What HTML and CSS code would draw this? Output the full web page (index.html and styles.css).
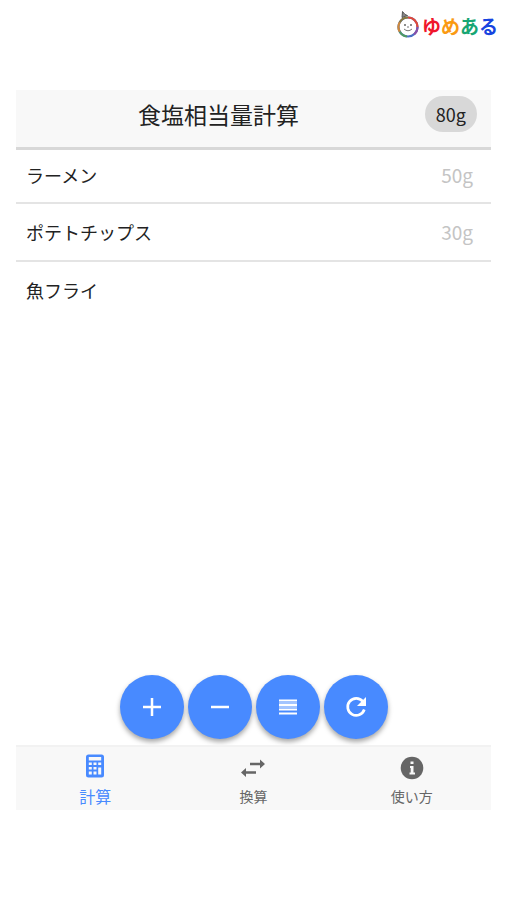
FILE: index.html
```html
<!DOCTYPE html>
<html lang="ja">
<head>
    <meta charset="UTF-8">
    <meta name="viewport" content="width=device-width, initial-scale=1.0">
    <title>食塩相当量計算</title>
    <link rel="stylesheet" href="styles.css">
</head>
<body>
    <div class="brand">
        <svg class="brand-icon" width="24" height="30" viewBox="0 0 24 30" fill="none">
            <path d="M6 7.500L6.500 1.500L9 4.500L11.500 5.500z" fill="#888" stroke="#555" stroke-width="1"/>
            <g stroke-width="2.200">
                <circle cx="12" cy="17" r="9.500" stroke="#4b6fc4"/>
                <path d="M12 7.500A9.500 9.500 0 0 1 21.500 17" stroke="#e0493a"/>
                <path d="M21.500 17A9.500 9.500 0 0 1 18 24.400" stroke="#8a4fa8"/>
                <path d="M3.800 12.200A9.500 9.500 0 0 1 12 7.500" stroke="#8a7a3c"/>
                <path d="M3.800 21.800A9.500 9.500 0 0 1 3.800 12.200" stroke="#d08a3a"/>
                <path d="M3.800 21.800A9.500 9.500 0 0 0 11 26.500" stroke="#4f9b62"/>
            </g>
            <circle cx="9" cy="15" r="1" fill="#666"/>
            <circle cx="15" cy="15" r="1" fill="#666"/>
            <path d="M8 19Q12 22.500 16 19M12 16v2" stroke="#777" stroke-width="1"/>
        </svg>
        <span class="brand-name"><span class="red">ゆ</span><span class="orange">め</span><span class="green">あ</span><span class="blue">る</span></span>
    </div>

    <div class="app">
        <header class="header">
            <h1>食塩相当量計算</h1>
            <span class="total">80g</span>
        </header>

        <ul class="food-list">
            <li><span>ラーメン</span><span class="amount">50g</span></li>
            <li><span>ポテトチップス</span><span class="amount">30g</span></li>
            <li><span>魚フライ</span></li>
        </ul>

        <div class="actions">
            <button type="button" class="fab" aria-label="追加">
                <svg width="24" height="24" viewBox="0 0 24 24"><path d="M12 3v18M3 12h18" stroke="#fff" stroke-width="2.500"/></svg>
            </button>
            <button type="button" class="fab" aria-label="削除">
                <svg width="24" height="24" viewBox="0 0 24 24"><path d="M3 12h18" stroke="#fff" stroke-width="2.500"/></svg>
            </button>
            <button type="button" class="fab" aria-label="一覧">
                <svg width="24" height="24" viewBox="0 0 24 24">
                    <path d="M3 7h18v6H3z" fill="#fff" opacity="0.5"/>
                    <path d="M3 5.500h18M3 10h18M3 14.500h18M3 18.500h18" stroke="#fff" stroke-width="2"/>
                </svg>
            </button>
            <button type="button" class="fab" aria-label="リセット">
                <svg width="24" height="24" viewBox="0 0 24 24">
                    <path d="M18.800 6.500A8.500 8.500 0 1 0 20.300 14.500" fill="none" stroke="#fff" stroke-width="2.700"/>
                    <path d="M22 2v9h-9z" fill="#fff"/>
                </svg>
            </button>
        </div>

        <nav class="tabs">
            <a href="#calc" class="tab active">
                <svg width="26" height="26" viewBox="0 0 26 26" fill="currentColor">
                    <path fill-rule="evenodd" d="M6.500 1.500h13a2.500 2.500 0 0 1 2.500 2.500v18a2.500 2.500 0 0 1-2.500 2.500h-13A2.500 2.500 0 0 1 4 22V4a2.500 2.500 0 0 1 2.500-2.500zM6.800 4v3.500h12.400V4zM6.800 9.500V12h3V9.500zM11.500 9.500V12h3V9.500zM16.200 9.500V12h3V9.500zM6.800 14v2.500h3V14zM11.500 14v2.500h3V14zM6.800 18.500v3h3v-3zM11.500 18.500v3h3v-3zM16.200 14.500v7h3v-7z"/>
                </svg>
                <span>計算</span>
            </a>
            <a href="#convert" class="tab">
                <svg width="26" height="26" viewBox="0 0 26 26" fill="currentColor">
                    <path d="M10 7.800h10V4.500l5 4.500-5 4.500v-3.300H10zM16 16.300H6V13l-5 4.500L6 22v-3.300h10z"/>
                </svg>
                <span>換算</span>
            </a>
            <a href="#help" class="tab">
                <svg width="26" height="26" viewBox="0 0 26 26">
                    <circle cx="13" cy="13" r="11.300" fill="currentColor"/>
                    <path d="M11.500 6.500h3v2.500h-3zM11 11h3.500v6.500H16v2h-5.500v-2h1.200v-4.500H11z" fill="#f8f8f8"/>
                </svg>
                <span>使い方</span>
            </a>
        </nav>
    </div>
</body>
</html>
```

FILE: styles.css
```css
* {
    margin: 0;
    padding: 0;
    box-sizing: border-box;
}

body {
    min-height: 100vh;
    display: flex;
    flex-direction: column;
    padding: 0 15px 90px 16px;
    background: #fff;
    color: #222;
    font-family: "Noto Sans CJK JP", sans-serif;
}

.brand {
    height: 90px;
    display: flex;
    justify-content: flex-end;
    align-items: flex-start;
    padding-top: 10px;
    margin-right: -7px;
}

.brand-icon {
    margin-right: 2px;
}

.brand-name {
    font-size: 19px;
    font-weight: bold;
    line-height: 32px;
}

.red { color: #f0162c; }
.orange { color: #fa9a12; }
.green { color: #17a673; }
.blue { color: #1744e0; }

.app {
    flex: 1;
    display: flex;
    flex-direction: column;
}

.header {
    display: grid;
    grid-template-columns: 1fr auto 1fr;
    align-items: center;
    height: 60px;
    padding: 0 14px 10px;
    background: #f8f8f8;
    border-bottom: 3px solid #d8d8d8;
}

.header h1 {
    grid-column: 2;
    font-size: 23px;
    font-weight: normal;
    line-height: 32px;
    margin-right: 70px;
}

.total {
    grid-column: 3;
    justify-self: end;
    padding: 0 11px;
    border-radius: 18px;
    background: #d8d8d8;
    font-size: 18px;
    line-height: 36px;
}

.food-list {
    list-style: none;
}

.food-list li {
    display: flex;
    justify-content: space-between;
    align-items: baseline;
    padding: 0 18px 0 10px;
    border-bottom: 2px solid #e4e4e4;
    font-size: 18px;
    line-height: 56px;
}

.food-list li:first-child {
    padding-bottom: 2px;
    line-height: 50px;
}

.food-list li:last-child {
    border-bottom: none;
}

.food-list .amount {
    color: #c4c4c4;
    font-size: 19px;
    line-height: 32px;
}

.actions {
    display: flex;
    justify-content: center;
    gap: 4px;
    margin-top: auto;
    padding-bottom: 6px;
}

.fab {
    display: flex;
    justify-content: center;
    align-items: center;
    width: 64px;
    height: 64px;
    border: none;
    border-radius: 50%;
    background: #488aff;
    box-shadow: 0 3px 5px rgba(0, 0, 0, 0.35);
    cursor: pointer;
}

.tabs {
    display: flex;
    height: 65px;
    background: #f8f8f8;
    border-top: 2px solid #f2f2f2;
}

.tab {
    flex: 1;
    display: flex;
    flex-direction: column;
    align-items: center;
    justify-content: space-between;
    padding: 8px 0 4px;
    color: #666;
    font-size: 14px;
    line-height: 20px;
    text-decoration: none;
}

.tab.active {
    padding-top: 6px;
    color: #488aff;
    font-size: 16px;
}
```
